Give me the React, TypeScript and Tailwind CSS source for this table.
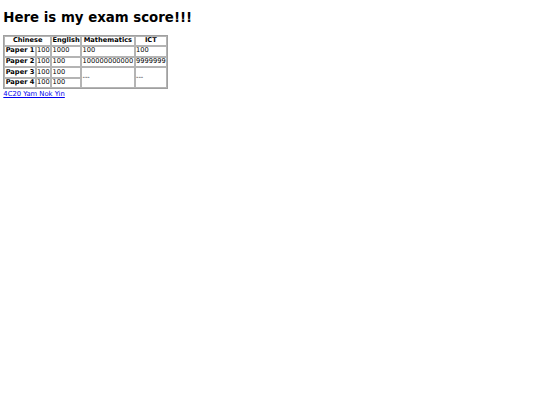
import React from "react";

const td = "border border-[#b4b4b4] px-[0.35px] py-[0.4px] text-left align-middle";
const th = "border border-[#b4b4b4] px-[0.35px] py-[0.4px] font-bold text-center align-middle";

export default function App() {
  return (
    <div
      className="min-h-[405px] w-[540px] bg-white px-[3.33px] pt-[1px] text-black"
      style={{ fontFamily: '"DejaVu Sans", Verdana, sans-serif' }}
    >
      <h1 className="mt-[9px] mb-[9px] text-[13.33px] font-bold leading-[1.164]">Here is my exam score!!!</h1>
      <table className="border-separate border-spacing-[0.5px] border border-[#a0a0a0] text-[6.67px] leading-[1.164]">
        <tbody>
          <tr>
            <th className={th} colSpan={2}>Chinese</th>
            <th className={th}>English</th>
            <th className={th}>Mathematics</th>
            <th className={th}>ICT</th>
          </tr>
          <tr>
            <th className={th}>Paper 1</th>
            <td className={td}>100</td>
            <td className={td}>1000</td>
            <td className={td}>100</td>
            <td className={td}>100</td>
          </tr>
          <tr>
            <th className={th}>Paper 2</th>
            <td className={td}>100</td>
            <td className={td}>100</td>
            <td className={td}>100000000000</td>
            <td className={td}>9999999</td>
          </tr>
          <tr>
            <th className={th}>Paper 3</th>
            <td className={td}>100</td>
            <td className={td}>100</td>
            <td className={td} rowSpan={2}>---</td>
            <td className={td} rowSpan={2}>---</td>
          </tr>
          <tr>
            <th className={th}>Paper 4</th>
            <td className={td}>100</td>
            <td className={td}>100</td>
          </tr>
        </tbody>
      </table>
      <div className="mt-[1.5px] text-[6.8px] leading-[1.164]">
        <a href="#" className="text-[#0000ee] underline">
          4C20 Yam Nok Yin
        </a>
      </div>
    </div>
  );
}
